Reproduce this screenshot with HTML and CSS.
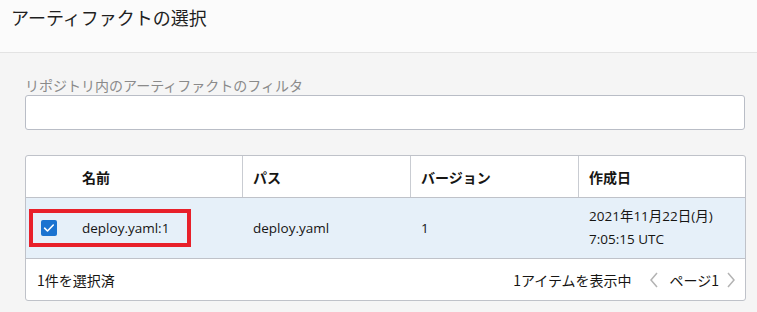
FILE: index.html
```html
<!DOCTYPE html>
<html lang="ja">
<head>
<meta charset="utf-8">
<link rel="stylesheet" href="styles.css">
</head>
<body>
<header class="header"><h1 class="title">アーティファクトの選択</h1></header>
<main class="content">
  <label class="field-label" for="filter">リポジトリ内のアーティファクトのフィルタ</label>
  <input id="filter" class="filter-input" type="text">
  <div class="table-card">
    <div class="row head-row">
      <div class="cell name-head">名前</div>
      <div class="cell sep">パス</div>
      <div class="cell sep">バージョン</div>
      <div class="cell sep">作成日</div>
    </div>
    <div class="row data-row selected">
      <div class="cell name-cell">
        <div class="highlight">
          <span class="checkbox"><svg width="16" height="16" viewBox="0 0 16 16"><path d="M3.6 8.2l2.9 2.8 5.8-6" fill="none" stroke="#fff" stroke-width="1.6" stroke-linecap="round" stroke-linejoin="round"/></svg></span>
          <span class="name-text">deploy.yaml:1</span>
        </div>
      </div>
      <div class="cell">deploy.yaml</div>
      <div class="cell">1</div>
      <div class="cell date">2021年11月22日(月)<br>7:05:15 UTC</div>
    </div>
    <div class="footer">
      <span>1件を選択済</span>
      <div class="pager">
        <span class="count">1アイテムを表示中</span>
        <svg class="chev" width="12" height="18" viewBox="0 0 12 18"><path d="M9 2L3 9l6 7" fill="none" stroke="#b3b3b3" stroke-width="1.5"/></svg>
        <span class="page">ページ1</span>
        <svg class="chev" width="12" height="18" viewBox="0 0 12 18"><path d="M3 2l6 7-6 7" fill="none" stroke="#b3b3b3" stroke-width="1.5"/></svg>
      </div>
    </div>
  </div>
</main>
</body>
</html>
```

FILE: styles.css
```css
html, body { margin: 0; padding: 0; }
body {
  background: #f5f5f5;
  font-family: "Open Sans", "Noto Sans CJK JP", sans-serif;
  color: #161513;
  font-size: 13px;
  width: 757px;
  height: 312px;
  overflow: hidden;
}
.header {
  background: #fbfbfb;
  height: 53px;
  border-bottom: 1px solid #e3e3e3;
  box-sizing: border-box;
  padding: 4px 0 0 11px;
}
.title {
  margin: 0;
  font-family: "Noto Sans CJK JP", sans-serif;
  font-weight: 400;
  font-size: 18px;
  line-height: 26px;
  color: #1f1f1f;
}
.content {
  padding: 23px 12px 0 25px;
}
.field-label {
  display: block;
  font-family: "Noto Sans CJK JP", sans-serif;
  font-size: 14px;
  line-height: 19px;
  color: #8a8a8a;
}
.filter-input {
  display: block;
  box-sizing: border-box;
  width: 720px;
  height: 35px;
  margin: 0;
  border: 1px solid #b9bdc6;
  border-radius: 3px;
  background: #fff;
}
.table-card {
  margin-top: 25px;
  width: 721px;
  box-sizing: border-box;
  border: 1px solid #bfc2c9;
  border-radius: 3px;
  background: #fff;
  overflow: hidden;
}
.row {
  display: grid;
  grid-template-columns: 216px 168px 168px 1fr;
  border-bottom: 1px solid #bfc2c9;
}
.cell {
  display: flex;
  align-items: center;
  padding: 0 10px;
}
.head-row { height: 42px; box-sizing: border-box; }
.head-row .cell {
  font-family: "Noto Sans CJK JP", sans-serif;
  font-weight: 700;
  font-size: 14px;
}
.head-row .sep { border-left: 1px solid #c9ccd2; }
.head-row .name-head { padding-left: 56px; }
.data-row {
  height: 61px;
  box-sizing: border-box;
  font-size: 13.5px;
}
.data-row .cell:nth-child(2),
.data-row .cell:nth-child(3),
.data-row .cell:nth-child(4) { padding-left: 11px; }
.selected { background: #e6f0f9; }
.name-cell { padding: 0 0 0 3px; }
.highlight {
  display: flex;
  align-items: center;
  width: 154px;
  height: 30px;
  border: 4px solid #e8202a;
  box-sizing: content-box;
}
.checkbox {
  width: 16px;
  height: 16px;
  margin-left: 8px;
  background: #1b73d0;
  border-radius: 2px;
  display: flex;
}
.name-text { margin-left: 25px; }
.date { line-height: 23px; font-size: 13.5px; }
.footer {
  height: 41px;
  display: flex;
  align-items: center;
  justify-content: space-between;
  padding: 0 8px 0 11px;
  font-family: "Noto Sans CJK JP", sans-serif;
  font-size: 14px;
}
.pager { display: flex; align-items: center; }
.count { margin-right: 16px; }
.page { margin: 0 6px 0 10px; }
```
